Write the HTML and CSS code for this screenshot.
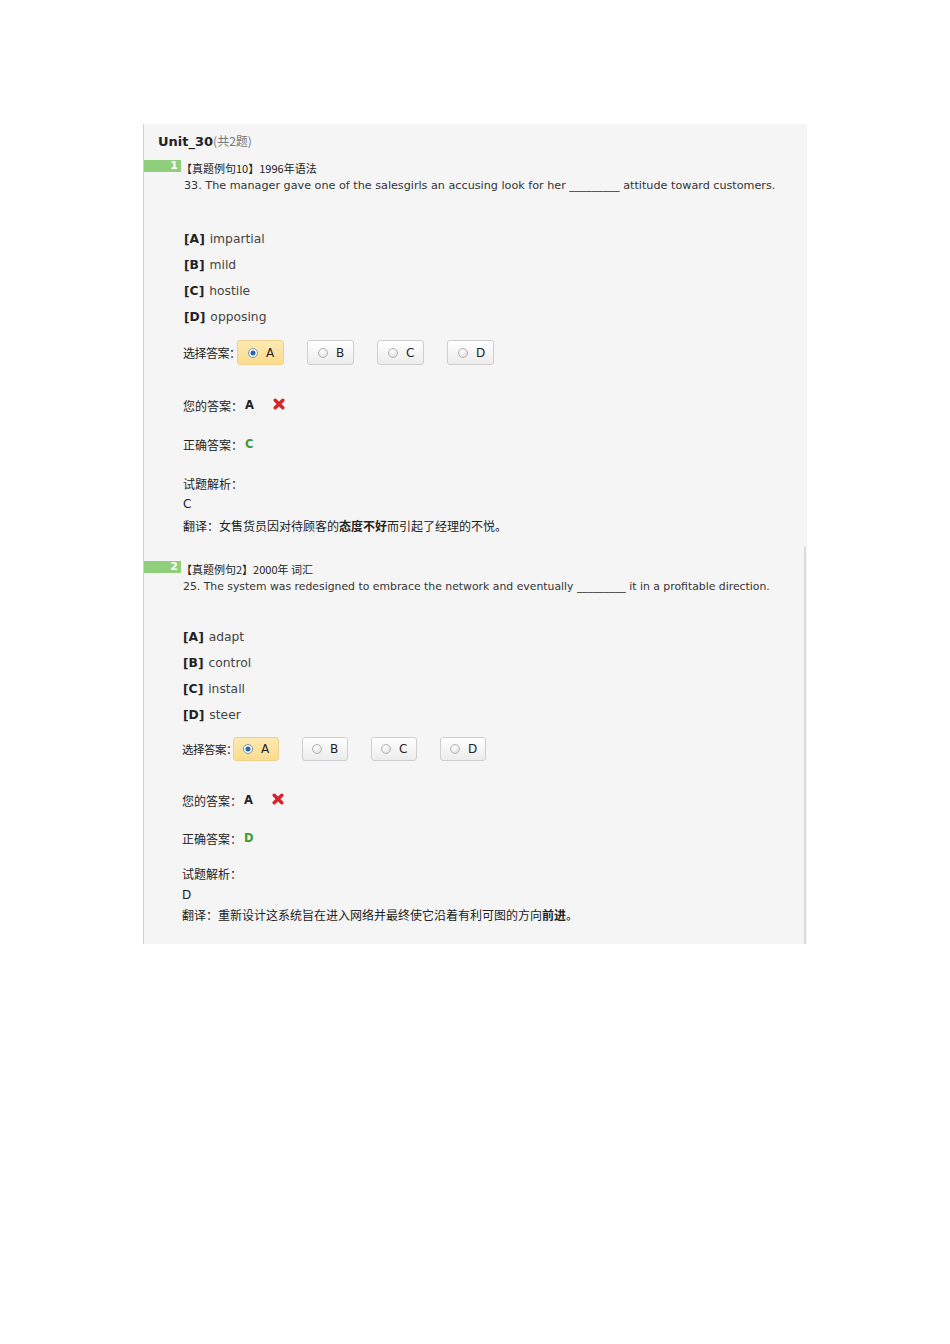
FILE: index.html
```html
<!DOCTYPE html>
<html lang="zh-CN">
<head>
<meta charset="utf-8">
<title>Unit_30</title>
<link rel="stylesheet" href="styles.css">
</head>
<body>
<div class="panel">
  <div class="title"><b>Unit_30</b><span class="count">(共2题)</span></div>

  <div class="question q1">
    <div class="head">
      <span class="badge">1</span>
      <span class="tag">【真题例句10】1996年语法</span>
    </div>
    <div class="stem">33. The manager gave one of the salesgirls an accusing look for her _________ attitude toward customers.</div>
    <ul class="options">
      <li><b>[A]</b> impartial</li>
      <li><b>[B]</b> mild</li>
      <li><b>[C]</b> hostile</li>
      <li><b>[D]</b> opposing</li>
    </ul>
    <div class="choose">
      <span class="label">选择答案：</span>
      <span class="btn selected"><span class="radio on"></span>A</span>
      <span class="btn"><span class="radio"></span>B</span>
      <span class="btn"><span class="radio"></span>C</span>
      <span class="btn"><span class="radio"></span>D</span>
    </div>
    <div class="line yours">您的答案：<b>A</b><svg class="wrong" viewBox="0 0 12 12" width="12" height="12"><path d="M2.2 2.2 L9.8 9.8 M9.8 2.2 L2.2 9.8" stroke="#d8232a" stroke-width="3.4" stroke-linecap="round"/></svg></div>
    <div class="line correct">正确答案：<b class="green">C</b></div>
    <div class="analysis">
      <div>试题解析：</div>
      <div class="en">C</div>
      <div>翻译：女售货员因对待顾客的<b>态度不好</b>而引起了经理的不悦。</div>
    </div>
  </div>

  <div class="question q2">
    <div class="head">
      <span class="badge">2</span>
      <span class="tag">【真题例句2】2000年 词汇</span>
    </div>
    <div class="stem">25. The system was redesigned to embrace the network and eventually _________ it in a profitable direction.</div>
    <ul class="options">
      <li><b>[A]</b> adapt</li>
      <li><b>[B]</b> control</li>
      <li><b>[C]</b> install</li>
      <li><b>[D]</b> steer</li>
    </ul>
    <div class="choose">
      <span class="label">选择答案：</span>
      <span class="btn selected"><span class="radio on"></span>A</span>
      <span class="btn"><span class="radio"></span>B</span>
      <span class="btn"><span class="radio"></span>C</span>
      <span class="btn"><span class="radio"></span>D</span>
    </div>
    <div class="line yours">您的答案：<b>A</b><svg class="wrong" viewBox="0 0 12 12" width="12" height="12"><path d="M2.2 2.2 L9.8 9.8 M9.8 2.2 L2.2 9.8" stroke="#d8232a" stroke-width="3.4" stroke-linecap="round"/></svg></div>
    <div class="line correct">正确答案：<b class="green">D</b></div>
    <div class="analysis">
      <div>试题解析：</div>
      <div class="en">D</div>
      <div>翻译：重新设计这系统旨在进入网络并最终使它沿着有利可图的方向<b>前进</b>。</div>
    </div>
  </div>
</div>
</body>
</html>
```

FILE: styles.css
```css
html, body {
  margin: 0;
  padding: 0;
  background: #ffffff;
}

body {
  font-family: "DejaVu Sans", "Noto Sans CJK SC", sans-serif;
  color: #333333;
}

.panel {
  margin: 124px 0 0 143px;
  width: 663px;
  background: #f5f5f5;
  border-left: 1px solid #d2d2d2;
}

.title {
  padding: 8px 0 0 14px;
  height: 18px;
  line-height: 18px;
  font-size: 13px;
  color: #222;
}

.title .count {
  color: #777;
  font-size: 12px;
  font-family: "Noto Sans CJK SC", "DejaVu Sans", sans-serif;
}

.question {
  display: flex;
  flex-direction: column;
}

.q1 {
  padding-top: 10px;
}

.q2 {
  margin-top: 11px;
  padding-top: 14px;
  padding-bottom: 18px;
  border-right: 2px solid #dcdcdc;
  margin-right: 1px;
}

.head {
  display: flex;
  align-items: flex-start;
  height: 16px;
}

.badge {
  width: 37px;
  height: 12px;
  background: #8fcf7c;
  color: #fff;
  font-weight: bold;
  font-size: 11px;
  line-height: 12px;
  text-align: right;
  padding-right: 3px;
  box-sizing: border-box;
  font-family: "DejaVu Sans", sans-serif;
}

.tag {
  font-size: 11px;
  line-height: 16px;
  color: #222;
  font-family: "Noto Sans CJK SC", "DejaVu Sans", sans-serif;
}

.stem {
  margin: 2px 0 0 40px;
  font-size: 11.2px;
  line-height: 16px;
  color: #333;
  white-space: nowrap;
}

.q2 .stem {
  margin-left: 39px;
  font-size: 10.85px;
}

.options {
  list-style: none;
  margin: 32px 0 0 40px;
  padding: 0;
}

.q2 .options {
  margin-top: 29px;
  margin-left: 39px;
}

.options li {
  height: 26px;
  line-height: 26px;
  font-size: 12.3px;
  color: #444;
}

.options li b {
  color: #222;
  margin-right: 1px;
}

.choose {
  display: flex;
  align-items: center;
  margin: 10px 0 0 39px;
  height: 25px;
}

.q2 .choose {
  margin-top: 8px;
  margin-left: 38px;
}

.choose .label {
  flex-shrink: 0;
  white-space: nowrap;
  font-size: 12px;
  font-family: "Noto Sans CJK SC", sans-serif;
  font-feature-settings: "halt" 0;
  color: #222;
  width: 54px;
  letter-spacing: -0.5px;
}

.choose .label {
  font-feature-settings: "hwid" 0;
}

.q2 .choose .label {
  width: 51px;
  font-size: 11.5px;
}

.btn {
  flex-shrink: 0;
  display: flex;
  align-items: center;
  width: 47px;
  height: 25px;
  box-sizing: border-box;
  border: 1px solid #cfcfcf;
  border-radius: 3px;
  background: linear-gradient(#ffffff, #ececec);
  font-size: 12px;
  color: #222;
  padding-left: 10px;
  margin-right: 23px;
}

.choose .label + .btn {
  margin-left: 0;
}

.q2 .btn {
  width: 46px;
  height: 24px;
  padding-left: 9px;
}

.btn.selected {
  background: linear-gradient(#fde9b2, #fbdc8e);
  border-color: #f1d08a;
}

.radio {
  width: 10px;
  height: 10px;
  border-radius: 50%;
  border: 1px solid #b4b4b4;
  background: radial-gradient(circle at 40% 35%, #ffffff, #d8d8d8);
  box-sizing: border-box;
  margin-right: 8px;
}

.radio.on {
  border-color: #7b93b0;
  background: radial-gradient(circle, #1f5fa7 0, #2f6db5 2.2px, #e8eef6 2.8px, #ffffff 4px);
}

.line {
  display: flex;
  align-items: center;
  height: 20px;
  font-size: 12px;
  font-family: "Noto Sans CJK SC", "DejaVu Sans", sans-serif;
  color: #222;
  margin-left: 39px;
}

.q2 .line {
  margin-left: 38px;
}

.line b {
  font-family: "DejaVu Sans", sans-serif;
  font-weight: bold;
  font-size: 11.5px;
  margin-left: 2px;
}

.yours {
  margin-top: 30px;
}

.q2 .yours {
  margin-top: 29px;
}

.correct {
  margin-top: 19px;
}

.q2 .correct {
  margin-top: 18px;
}

.wrong {
  margin-left: 19px;
  margin-top: -3px;
}

.green {
  color: #3c9a3c;
}

.analysis {
  margin: 19px 0 0 39px;
  font-size: 12px;
  line-height: 21px;
  font-family: "Noto Sans CJK SC", "DejaVu Sans", sans-serif;
  color: #222;
}

.q2 .analysis {
  margin-top: 16px;
  margin-left: 38px;
  line-height: 20.5px;
}

.analysis .en {
  font-family: "DejaVu Sans", sans-serif;
}
```
